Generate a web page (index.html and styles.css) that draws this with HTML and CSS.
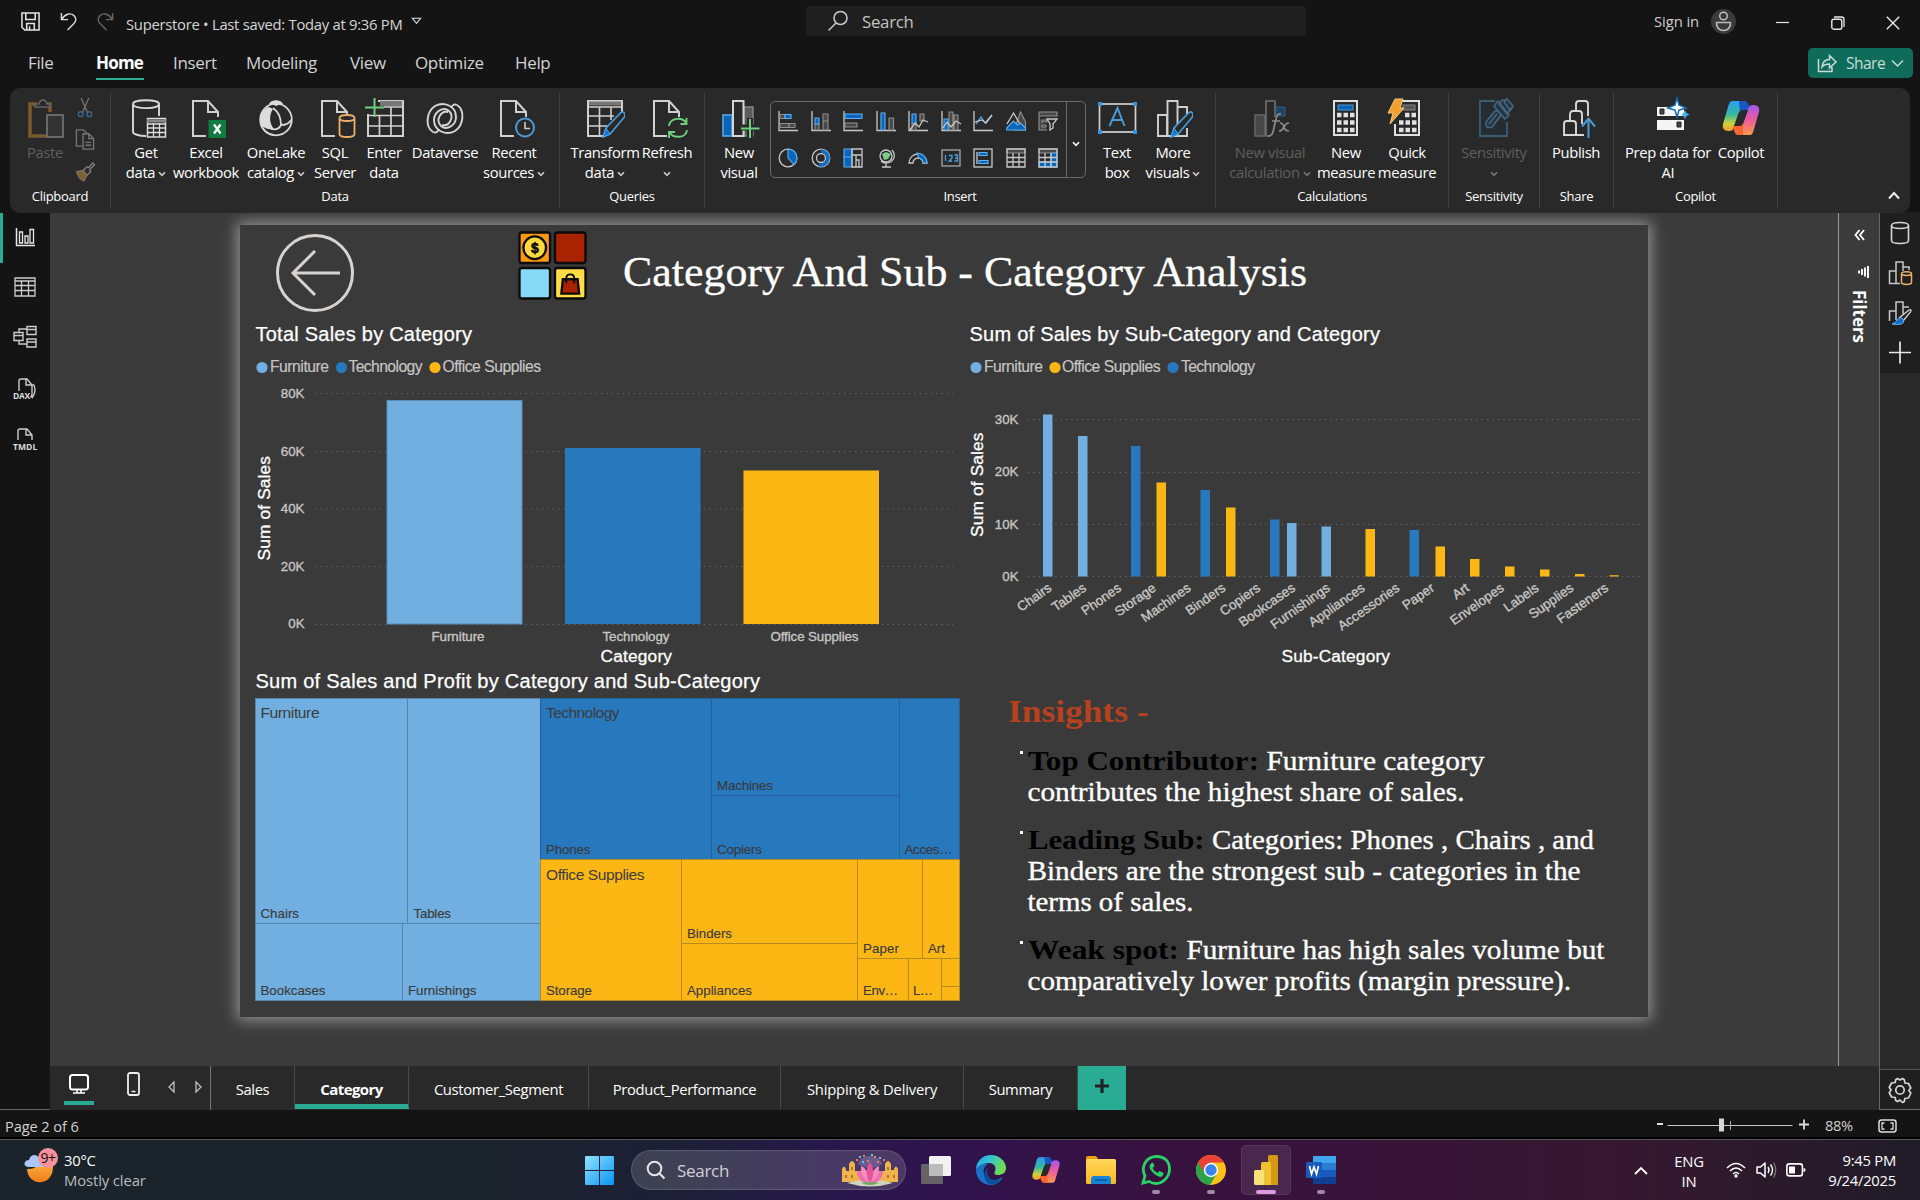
FILE: index.html
```html
<!DOCTYPE html>
<html lang="en">
<head>
<meta charset="utf-8">
<title>Superstore</title>
<link rel="stylesheet" href="styles.css">
</head>
<body>
<svg class="defs" width="0" height="0" aria-hidden="true">
  <defs>
    <linearGradient id="cpA" x1="0" y1="0" x2="0" y2="1"><stop offset="0" stop-color="#2a9df0"/><stop offset=".45" stop-color="#35b8a0"/><stop offset=".75" stop-color="#c8d236"/><stop offset="1" stop-color="#f59a2c"/></linearGradient>
    <linearGradient id="cpB" x1="0" y1="0" x2="0" y2="1"><stop offset="0" stop-color="#a259f0"/><stop offset=".5" stop-color="#ec5c9b"/><stop offset="1" stop-color="#fb9a4a"/></linearGradient>
    <linearGradient id="win" x1="0" y1="0" x2="1" y2="1"><stop offset="0" stop-color="#8fe3ff"/><stop offset="1" stop-color="#0a93f5"/></linearGradient>
    <linearGradient id="edge" x1="0" y1="0" x2="1" y2=".3"><stop offset="0" stop-color="#2aa7ea"/><stop offset=".5" stop-color="#35c4d0"/><stop offset="1" stop-color="#6fdc4e"/></linearGradient>
    <linearGradient id="moon" x1="0" y1="0" x2="0" y2="1"><stop offset="0" stop-color="#ffc34d"/><stop offset="1" stop-color="#ef7d1a"/></linearGradient>
    <linearGradient id="fold" x1="0" y1="0" x2="0" y2="1"><stop offset="0" stop-color="#ffd65c"/><stop offset="1" stop-color="#fbb91c"/></linearGradient>
    <symbol id="chev" viewBox="0 0 8 6"><path d="M1 1.200 4 4.400 7 1.200" fill="none" stroke="currentColor" stroke-width="1.600"/></symbol>
    <symbol id="copilot" viewBox="0 0 40 40">
      <path d="M11 3h11c3 0 4 2 5 5l1 4h-6c-3 0-4 2-5 5l-4 12c-1 3-2 4-5 4H7c-4 0-6-3-5-7l5-17c1-4 2-6 4-6z" fill="url(#cpA)"/>
      <path d="M18 3h5c3 0 4 2 5 5l1 4h-6c-2 0-3 1-4 3z" fill="#1b55c4"/>
      <path d="M29 37H18c-3 0-4-2-5-5l-1-4h6c3 0 4-2 5-5l4-12c1-3 2-4 5-4h1c4 0 6 3 5 7l-5 17c-1 4-2 6-4 6z" fill="url(#cpB)"/>
      <path d="M22 37h-4c-3 0-4-2-5-5l-1-4h6c2 0 3-1 4-3z" fill="#f8632f"/>
      <path d="M17 17c1-3 2-5 5-5h5l-4 11c-1 3-2 5-5 5h-5z" fill="#2a2a2a"/>
    </symbol>
    <symbol id="page" viewBox="0 0 40 40"><path d="M20 38H7V3h15l10 11v5M22 3v11h10" fill="none" stroke="#d0d0d0" stroke-width="2"/></symbol>
    <symbol id="pencil" viewBox="0 0 40 40"><path d="M18 39l3-9L36 14.500q2.500-1.500 3.500 1t-.5 4L25 36z" fill="#292929" stroke="#4a9ad8" stroke-width="1.700"/><path d="M18 39l3-9 4 6z" fill="#1377d0" stroke="#4aa0e4"/></symbol>
  </defs>
</svg>

<header class="titlebar">
  <div class="quick">
    <svg class="ic-save" viewBox="0 0 20 20"><path d="M1 1h18v18H4L1 16zM5 1v7h10V1M6 19v-7h8v7M9 15v4" fill="none" stroke="#e4e4e4" stroke-width="1.600"/></svg>
    <svg class="ic-undo" viewBox="0 0 18 20"><path d="M1.500 1v7h7M2 7.500C5 2 11 .5 14.500 3.500s2.500 6.500 0 9L8 19" fill="none" stroke="#dcdcdc" stroke-width="1.500"/></svg>
    <svg class="ic-redo" viewBox="0 0 18 20"><path d="M16.500 1v7h-7M16 7.500C13 2 7 .5 3.500 3.500s-2.500 6.500 0 9L10 19" fill="none" stroke="#666" stroke-width="1.500"/></svg>
    <span class="doc">Superstore • Last saved: Today at 9:36 PM</span>
    <svg class="ic-caret" viewBox="0 0 12 8"><path d="M1.500 1h9L6 6.500z" fill="none" stroke="#ddd" stroke-width="1.200"/></svg>
  </div>
  <div class="search">
    <svg width="22" height="22" viewBox="0 0 22 22"><circle cx="13.500" cy="8" r="6.500" fill="none" stroke="#ccc" stroke-width="1.500"/><path d="M9 13 1.500 20.500" stroke="#ccc" stroke-width="1.500"/></svg>
    <span>Search</span>
  </div>
  <div class="account">
    <span>Sign in</span>
    <svg width="25" height="25" viewBox="0 0 25 25"><circle cx="12.500" cy="12.500" r="12.500" fill="#3a3a3a"/><circle cx="12.500" cy="7" r="3.800" fill="none" stroke="#bdbdbd" stroke-width="1.500"/><path d="M5.500 13.500h14c.5 5-3 8-7 8s-7.500-3-7-8z" fill="none" stroke="#bdbdbd" stroke-width="1.500"/></svg>
  </div>
  <div class="winbtns">
    <svg width="14" height="14" viewBox="0 0 14 14"><path d="M0 6.500h13" stroke="#e8e8e8" stroke-width="1.200"/></svg>
    <svg width="14" height="14" viewBox="0 0 14 14"><rect x=".8" y="3.200" width="10" height="10" rx="2" fill="none" stroke="#e8e8e8" stroke-width="1.400"/><path d="M3 1h7.500q2.500 0 2.500 2.500V11" fill="none" stroke="#e8e8e8" stroke-width="1.300"/></svg>
    <svg width="14" height="14" viewBox="0 0 14 14"><path d="M.8.8l12.400 12.400M13.200.8.8 13.200" stroke="#f0f0f0" stroke-width="1.300"/></svg>
  </div>
</header>

<nav class="menu">
  <span class="m-file">File</span><span class="m-home on">Home</span><span class="m-insert">Insert</span><span class="m-model">Modeling</span><span class="m-view">View</span><span class="m-opt">Optimize</span><span class="m-help">Help</span>
  <button class="share"><svg width="20" height="20" viewBox="0 0 20 20"><path d="M1.500 6v12.500H15V14M5 14c.5-5 3-7.500 7.500-7.500V2.500L19 9l-6.500 6v-4C9 11 7 11.500 5 14z" fill="none" stroke="#c7dcd7" stroke-width="1.500"/></svg><span>Share</span><svg width="13" height="9" viewBox="0 0 13 9"><path d="M1 1.500l5.500 5.500L12 1.500" fill="none" stroke="#c7dcd7" stroke-width="1.500"/></svg></button>
</nav>

<section class="ribbon">
  <div class="group g-clip">
    <div class="tools">
      <div class="btn b66 off">
        <svg class="big" viewBox="0 0 40 40"><path d="M12 6H5v32h16M25 14V6h-5" fill="none" stroke="#7b5a2c" stroke-width="3.500"/><path d="M10 9V6h4q1-4 4-4t4 4h3v3z" fill="#292929" stroke="#666" stroke-width="1.600"/><rect x="22" y="17" width="16" height="22" fill="#333" stroke="#747474" stroke-width="1.700"/></svg>
        <b>Paste</b>
      </div>
      <div class="minis">
        <svg width="20" height="22" viewBox="0 0 20 22"><path d="M6 1l6.500 15M14 1 7.500 16" stroke="#777" stroke-width="1.300"/><circle cx="5.500" cy="18" r="2.500" fill="none" stroke="#3c6488" stroke-width="1.500"/><circle cx="14.500" cy="18" r="2.500" fill="none" stroke="#3c6488" stroke-width="1.500"/></svg>
        <svg width="20" height="22" viewBox="0 0 20 22"><path d="M7 18H1V1h7l4 3M8 5h6l5 5v11H8zM14 5v5h5M10.500 14h6M10.500 17h6" fill="none" stroke="#777" stroke-width="1.400"/></svg>
        <svg width="20" height="22" viewBox="0 0 20 22"><path d="M8 10l4-4 2 1 4-5 2 2-5 5 1 2-4 4z" fill="none" stroke="#808080" stroke-width="1.400"/><path d="M1 11l6-1 5 5-3 6c-4-1-6-4-8-10z" fill="#7b6038" stroke="#8f8068"/></svg>
      </div>
    </div>
    <p>Clipboard</p>
  </div>
  <div class="group g-data">
    <div class="tools">
      <div class="btn b70"><svg class="big" viewBox="0 0 40 40"><path d="M33 18V6c0-5-26-5-26 0v28c0 2 6 4 13 4M7 6c0 5.500 26 5.500 26 0" fill="none" stroke="#d8d8d8" stroke-width="1.900"/><rect x="21.500" y="20.500" width="18" height="18.500" fill="#292929" stroke="#ddd" stroke-width="1.500"/><path d="M21 23h19" stroke="#888" stroke-width="3"/><path d="M21 26h19M21 30h19M21 34.500h19M27.500 25v14M33.500 25v14" stroke="#ddd" stroke-width="1.300"/></svg><b>Get</b><b>data<svg class="cv"><use href="#chev"/></svg></b></div>
      <div class="btn b50"><svg class="big" viewBox="0 0 40 40"><use href="#page"/><rect x="22.500" y="22" width="17.500" height="18" fill="#107c41"/><path d="M28 26.500l6.500 9M34.500 26.500l-6.500 9" stroke="#fff" stroke-width="2.200"/></svg><b>Excel</b><b>workbook</b></div>
      <div class="btn b90"><svg class="big" viewBox="0 0 40 40"><circle cx="20" cy="21.500" r="15.800" fill="none" stroke="#d8d8d8" stroke-width="1.800"/><path d="M13 6c2-5 12-5 14 0-3 0-5 1-7 2-2-1-4-2-7-2zM12 9c2 0 3 1 5 2-4 6-4 14 1 20-6 1-10-1-13-4-2-7 0-14 7-18z" fill="#dcdcdc"/><path d="M17 10c7 5 8 11 8 17 4 0 8-1 10-5M25 27c-2 4-6 5-10 4M5 27c2 6 8 10 13 10" fill="none" stroke="#d8d8d8" stroke-width="1.800"/></svg><b>OneLake</b><b>catalog<svg class="cv"><use href="#chev"/></svg></b></div>
      <div class="btn b28"><svg class="big" viewBox="0 0 40 40"><use href="#page"/><path d="M24.500 20v16c0 4 15 4 15 0V20c0-4-15-4-15 0c0 4 15 4 15 0" fill="#292929" stroke="#eeb068" stroke-width="1.800"/></svg><b>SQL</b><b>Server</b></div>
      <div class="btn b70"><svg class="big" viewBox="0 0 40 40"><rect x="4" y="3" width="35" height="35" fill="none" stroke="#cfcfcf" stroke-width="2"/><path d="M16 5.500h22" stroke="#777" stroke-width="5"/><path d="M5 17.500h34M5 28h34M15.500 17v21M27 9v29M20 9h18" stroke="#cfcfcf" stroke-width="1.700"/><path d="M0 0h14v16H0z" fill="#292929"/><path d="M1 9.500h19M10.500 0v19" stroke="#6fcf7c" stroke-width="2"/></svg><b>Enter</b><b>data</b></div>
      <div class="btn b52"><svg class="big" viewBox="0 0 40 40"><g fill="none" stroke="#d5d5d5" stroke-width="1.900"><path d="M8 34C0 29 1 14 10 8c9-5 21 0 21 11 0 8-9 14-15 9-6-6 0-16 7-14"/><path d="M32 7c8 5 7 20-2 26-9 5-21 0-21-11 0-8 9-14 15-9 6 6 0 16-7 14"/><path d="M8 34q4 2 6-3M32 7q-4-2-6 3"/></g></svg><b>Dataverse</b></div>
      <div class="btn b86"><svg class="big" viewBox="0 0 40 40"><use href="#page"/><circle cx="31" cy="29.500" r="9" fill="#292929" stroke="#4a9ad8" stroke-width="2"/><path d="M31 24v6.500h5" fill="none" stroke="#ccc" stroke-width="1.600"/></svg><b>Recent</b><b>sources<svg class="cv"><use href="#chev"/></svg></b></div>
    </div>
    <p>Data</p>
  </div>
  <div class="group g-query">
    <div class="tools">
      <div class="btn b90"><svg class="big" viewBox="0 0 40 40"><path d="M37 14V3H3v35h18" fill="none" stroke="#cfcfcf" stroke-width="2"/><path d="M4 5.500h32" stroke="#777" stroke-width="4"/><path d="M3 9h34M3 18h26M3 28h20M14.500 9v29M26 9v13" stroke="#cfcfcf" stroke-width="1.600"/><use href="#pencil"/></svg><b>Transform</b><b>data<svg class="cv"><use href="#chev"/></svg></b></div>
      <div class="btn b34"><svg class="big" viewBox="0 0 40 40"><use href="#page"/><circle cx="31" cy="31" r="11" fill="#292929"/><path d="M22 28c1-9 14-9 17-3M39.500 20v6h-6M40 32c-1 9-14 8-17 3M22 40v-6h6" fill="none" stroke="#6fcf7c" stroke-width="1.900"/></svg><b>Refresh</b><b><svg class="cv solo"><use href="#chev"/></svg></b></div>
    </div>
    <p>Queries</p>
  </div>
  <div class="group g-insert">
    <div class="tools">
      <div class="btn b65"><svg class="big" viewBox="0 0 40 40"><rect x="25" y="9" width="9" height="29" fill="#5c5c5c" stroke="#888" stroke-width="1.400"/><rect x="4" y="17" width="9" height="21" fill="#0a63b4" stroke="#58a6e6" stroke-width="1.600"/><rect x="14" y="3" width="10.500" height="35" fill="#292929" stroke="#d5d5d5" stroke-width="2"/><path d="M20 29.500h20M31 20v20" stroke="#292929" stroke-width="6"/><path d="M22 30.500h18.500M31 21v19" stroke="#6fcf7c" stroke-width="2"/></svg><b>New</b><b>visual</b></div>
      <div class="gallery">
        <div class="cells">
          <svg viewBox="0 0 20 20"><path d="M1 0v19.500h19" class="w"/><path d="M2 3.500h5v4H2zM2 12.500h9v4H2z" class="g"/><path d="M7 3.500h6v4H7z" class="b"/><path d="M11 12.500h6v4h-6z" class="g"/></svg>
          <svg viewBox="0 0 20 20"><path d="M1 0v19.500h19" class="w"/><path d="M4 13h4v6H4zM12 10h5v9h-5zM12 3h5v7h-5z" class="g"/><path d="M4 7h4v6H4z" class="b"/></svg>
          <svg viewBox="0 0 20 20"><path d="M1 0v19.500h19" class="w"/><path d="M2 3h17v4.500H2z" class="b"/><path d="M2 12h12v4H2z" class="g"/></svg>
          <svg viewBox="0 0 20 20"><path d="M1 0v19.500h19" class="w"/><path d="M5 2h4v17H5z" class="b"/><path d="M13 7h4.500v12H13z" class="g"/></svg>
          <svg viewBox="0 0 20 20"><path d="M1 0v19.500h19" class="w"/><path d="M4 3h4v10H4z" class="b"/><path d="M12 3h4v7h-4zM4 13h4v6H4z" class="g"/><path d="M2 19l5-7 4 4 4-7 5 2" class="w"/></svg>
          <svg viewBox="0 0 20 20"><path d="M1 0v19.500h19" class="w"/><path d="M8 1h4v18H8zM13 4h4v15h-4z" class="g"/><path d="M3 8h4v11H3z" class="b"/><path d="M2 17l4-6 4 5 5-6 5 3" class="w"/></svg>
          <svg viewBox="0 0 20 20"><path d="M1 0v19.500h19" class="w"/><path d="M3 13l5-7 4 6 7-8" class="bl"/><path d="M2 11l7-2 4 3 6-8" class="w"/></svg>
          <svg viewBox="0 0 20 20"><path d="M8 19 14.500 1 19.500 11v8z" class="g"/><path d="M1 13 7.500 2l7 12" class="w"/><path d="M.7 19V17L7.500 10l4 4 3-2 5 5v2z" class="b"/></svg>
          <svg viewBox="0 0 20 20"><path d="M1 1h18v4H1zM1 5v14h8M4 9h5v2H4zM4 14h4v2H4z" class="g"/><path d="M9 8h10l-4 5v4l-3 2v-6z" class="w"/></svg>
          <svg viewBox="0 0 20 20"><circle cx="10" cy="10" r="8.800" class="w"/><path d="M10 1a9 9 0 0 1 6 15.500L10 10z" class="b"/></svg>
          <svg viewBox="0 0 20 20"><circle cx="10" cy="10" r="8.800" class="w"/><circle cx="10" cy="10" r="4.500" class="w"/><path d="M10 3a7 7 0 1 1-2 13.700" fill="none" stroke="#1170c6" stroke-width="3.500"/></svg>
          <svg viewBox="0 0 20 20"><path d="M1 1h8v8H1zM1 9h8v10H1z" class="b"/><path d="M9 1h10v18H9zM9 7h10M13 7v12M13 12h3v7" class="w"/></svg>
          <svg viewBox="0 0 20 20"><circle cx="10" cy="8" r="6" class="w"/><path d="M6 6l4-2 5 2-3 5-4 1z" fill="#7fc98b"/><path d="M16 2c5 6 1 13-6 13-3 0-4-1-5-2M10 15v4M6 19h9" class="w"/></svg>
          <svg viewBox="0 0 20 20"><path d="M1 15a9 9 0 0 1 18 0h-4a5 5 0 0 0-10 0z" class="w"/><path d="M9 5a10 10 0 0 1 10 10h-4a5 5 0 0 0-4-5z" class="b"/></svg>
          <svg viewBox="0 0 20 20"><rect x="1" y="2" width="18" height="16" class="g2"/><path d="M4.500 7v6M8 7.500h3v2.500l-3 3h3M13.500 7h3v6h-3M14 10h2" class="bl"/></svg>
          <svg viewBox="0 0 20 20"><rect x="1" y="1" width="18" height="18" class="w"/><path d="M4 4v12" class="w"/><path d="M6 4.500h8v3H6zM6 12.500h9v3H6z" class="b"/></svg>
          <svg viewBox="0 0 20 20"><path d="M1 1h18v4H1z" class="g"/><path d="M1 1h18v18H1zM1 9.500h18M1 14h18M7 5v14M13 5v14" class="w"/></svg>
          <svg viewBox="0 0 20 20"><path d="M1 1h18v4H1z" class="g"/><path d="M1 14h18v5H1zM13 5h6v14h-6z" class="b"/><path d="M1 1h18v18H1zM1 9.500h18M1 14h18M7 5v14M13 5v14" class="w"/></svg>
        </div>
        <div class="more"><svg class="cv"><use href="#chev"/></svg></div>
      </div>
      <div class="btn b62"><svg class="big" viewBox="0 0 40 40"><rect x="2.500" y="6" width="36" height="28" fill="none" stroke="#d0d0d0" stroke-width="1.700"/><path d="M12.500 28l8-18 7 18M15 22h11" fill="none" stroke="#4a9ad8" stroke-width="2"/><path d="M1 4h4v4H1zM36 4h4v4h-4zM1 32h4v4H1zM36 32h4v4h-4z" fill="#3593dc"/></svg><b>Text</b><b>box</b></div>
      <div class="btn b50"><svg class="big" viewBox="0 0 40 40"><path d="M5 38V17h9v21zM14.500 38V3h10v35M25 9h9v8M14 38h20v-8" fill="none" stroke="#d0d0d0" stroke-width="1.900"/><use href="#pencil"/></svg><b>More</b><b>visuals<svg class="cv"><use href="#chev"/></svg></b></div>
    </div>
    <p>Insert</p>
  </div>
  <div class="group g-calc">
    <div class="tools">
      <div class="btn b108 off"><svg class="big" viewBox="0 0 40 40"><rect x="5" y="17" width="10" height="21" fill="#474747" stroke="#666" stroke-width="1.500"/><path d="M16 38V3h9v16M16 38h4" fill="none" stroke="#707070" stroke-width="1.600"/><path d="M26 9h9v9h-9z" fill="#1d4468" stroke="#345c80"/><path d="M31 16q-4-1-5 5l-3 13q-1 4-5 4M22 23h8M30 25q3 0 4 4t5 4M39 25q-3 0-5 4t-5 4" fill="none" stroke="#8b8b8b" stroke-width="1.700"/></svg><b>New visual</b><b>calculation<svg class="cv"><use href="#chev"/></svg></b></div>
      <div class="btn b44"><svg class="big" viewBox="0 0 40 40"><rect x="8" y="3" width="23" height="34" fill="none" stroke="#e0e0e0" stroke-width="2"/><rect x="12" y="7" width="15" height="5" fill="#0a63b4" stroke="#4a9ad8"/><path d="M11 17h18M11 24.500h18M11 32h18" stroke="#e0e0e0" stroke-width="4.500" stroke-dasharray="4.500 2"/></svg><b>New</b><b>measure</b></div>
      <div class="btn b78"><svg class="big" viewBox="0 0 40 40"><path d="M12 3h20v34H8V26" fill="none" stroke="#e0e0e0" stroke-width="2"/><rect x="16" y="7" width="12" height="5" fill="#555" stroke="#888"/><path d="M18 17h12M12 24.500h18M12 32h18" stroke="#e0e0e0" stroke-width="4.500" stroke-dasharray="4.500 2"/><path d="M8 1h8l-3 9h4L3 26l3-11H1z" fill="#f0a02c" stroke="#f7c986"/></svg><b>Quick</b><b>measure</b></div>
    </div>
    <p>Calculations</p>
  </div>
  <div class="group g-sens">
    <div class="tools">
      <div class="btn b90 off"><svg class="big" viewBox="0 0 40 40"><path d="M21 3H6v35h27V24" fill="#252d33" stroke="#3a5d76" stroke-width="1.800"/><g fill="#29323a" stroke="#3f6784" stroke-width="1.700"><path d="M12 24 21 13q4-1 6 4L18 29q-7 2-6-5zM15 26l8-10"/><path d="M20 8l4-5 11 14-4 4zM25 6l3-4h3l7 8-5 6z"/><path d="M33 1l6 7-3 4-6-8z"/></g></svg><b>Sensitivity</b><b><svg class="cv solo"><use href="#chev"/></svg></b></div>
    </div>
    <p>Sensitivity</p>
  </div>
  <div class="group g-share">
    <div class="tools">
      <div class="btn b72"><svg class="big" viewBox="0 0 40 40"><path d="M28 37H8V26q0-3 3-3h6q3 0 3 3v11M14 22v-5q0-4 3-4h6q3 0 3 3v10M20 12V6q0-3 3-3h6q3 0 3 3v12" fill="none" stroke="#d8d8d8" stroke-width="1.900"/><path d="M32.500 40V21M26 28.500l6.500-8 6.500 8" fill="none" stroke="#4a9ad8" stroke-width="2"/></svg><b>Publish</b></div>
    </div>
    <p>Share</p>
  </div>
  <div class="group g-cop">
    <div class="tools">
      <div class="btn b108"><svg class="big" viewBox="0 0 40 40"><path d="M9 9h27v9H9zM9 22h27v10H9z" fill="#f5f5f5"/><path d="M12 11h4v5h-4zM29 24h4v5h-4z" fill="#444" stroke="#222"/><path d="M29 0l2 7 7 3-7 2-2 7-2-7-7-2 7-3z" fill="#fff" stroke="#126aae" stroke-width="1.500"/><path d="M37 12l1.500 3 3 1.500-3 1.500-1.500 3-1.500-3-2-1.500 2-1.500z" fill="#3db2f0"/></svg><b>Prep data for</b><b>AI</b></div>
      <div class="btn b38"><svg class="big"><use href="#copilot"/></svg><b>Copilot</b></div>
    </div>
    <p>Copilot</p>
  </div>
  <div class="collapse"><svg width="12" height="9" viewBox="0 0 12 9"><path d="M1 7.500 6 2l5 5.500" fill="none" stroke="#eee" stroke-width="2"/></svg></div>
</section>

<main class="work">
  <aside class="rail">
    <div class="slot on"><svg width="20" height="20" viewBox="0 0 20 20"><path d="M1.500 1v17.500H20" fill="none" stroke="#e8e8e8" stroke-width="1.500"/><path d="M4.500 5h3v11h-3zM10 9h3v7h-3zM15 2.500h3.500V16H15z" fill="none" stroke="#e8e8e8" stroke-width="1.300"/></svg></div>
    <div class="slot"><svg width="22" height="20" viewBox="0 0 22 20"><path d="M1 1h20v18H1zM1 4h20M1 8.500h20M1 13.500h20M7.500 4v15M14.500 4v15" fill="none" stroke="#ccc" stroke-width="1.300"/></svg></div>
    <div class="slot"><svg width="24" height="24" viewBox="0 0 24 24"><path d="M1 7.500h9v8H1zM1 10.500h9M14 1.500h9v8h-9zM14 4.500h9M14 14h9v8h-9zM14 17h9M6 7.500V4h8M6 15.500V19h8" fill="none" stroke="#ccc" stroke-width="1.400"/></svg></div>
    <div class="slot dax"><svg width="24" height="24" viewBox="0 0 24 24"><path d="M6 14V4q0-2 2-2h6l5 6v9q0 3-2 3M13 2v6h6M20 7q2 2 2 6t-3 8" fill="none" stroke="#ccc" stroke-width="1.400"/><text x="0" y="22" textLength="17">DAX</text></svg></div>
    <div class="slot dax"><svg width="24" height="24" viewBox="0 0 24 24"><path d="M5 13V4q0-2 2-2h7l5 6v5M13 2v6h6" fill="none" stroke="#ccc" stroke-width="1.400"/><text x="0" y="22.500" textLength="24">TMDL</text></svg></div>
  </aside>

  <div class="stage">
    <div class="canvas">
      <article class="report">
        <div class="head">
          <svg class="back" viewBox="0 0 78 78"><circle cx="39" cy="39" r="37.500" fill="none" stroke="#d6d4d2" stroke-width="3"/><path d="M64 39H17M39 17 17 39l22 22" fill="none" stroke="#d6d4d2" stroke-width="3"/></svg>
          <svg class="logo" viewBox="0 0 70 70"><g stroke="#0b0b0b" stroke-width="2.400"><rect x="1.500" y="1.500" width="31" height="31" rx="2.500" fill="#ff9811"/><rect x="37.500" y="1.500" width="31" height="31" rx="2.500" fill="#aa2300"/><rect x="1.500" y="37.500" width="31" height="31" rx="2.500" fill="#87daf6"/><rect x="37.500" y="37.500" width="31" height="31" rx="2.500" fill="#ffdc46"/><circle cx="17" cy="17" r="11.500" fill="#ffd93b"/><path d="M45.500 49h15l1.500 14.500H44z" fill="#aa2300"/><path d="M49 53v-5q0-4 4-4t4 4v5" fill="none" stroke-width="2"/></g><text x="17" y="22" text-anchor="middle" class="usd">$</text></svg>
          <svg class="title" viewBox="623 225 690 90" width="690" height="90"><text x="623" y="286" textLength="684" lengthAdjust="spacingAndGlyphs">Category And Sub - Category Analysis</text></svg>
        </div>

        <svg class="chart c1" viewBox="240 315 720 351" width="720" height="351">
          <text class="ttl" x="255.500" y="340.500" textLength="216.500">Total Sales by Category</text>
          <g class="leg"><circle cx="262" cy="367.500" r="5.600" fill="#71afe2"/><text x="270" y="372" textLength="59">Furniture</text><circle cx="341.500" cy="367.500" r="5.600" fill="#2878be"/><text x="348.500" y="372" textLength="74">Technology</text><circle cx="435" cy="367.500" r="5.600" fill="#fdb714"/><text x="442.500" y="372" textLength="98.500">Office Supplies</text></g>
          <path class="grid" d="M315 393.500H953M315 451.500H953M315 509H953M315 566.500H953M315 624.500H953"/>
          <g class="ax end"><text x="304.500" y="398">80K</text><text x="304.500" y="456">60K</text><text x="304.500" y="513">40K</text><text x="304.500" y="571">20K</text><text x="304.500" y="628">0K</text></g>
          <rect x="387" y="400.500" width="135" height="223.500" fill="#71afe0" stroke="#5a8cb4"/><rect x="565" y="448" width="135.500" height="176" fill="#2878be"/><rect x="743.500" y="470.500" width="135.500" height="153.500" fill="#fdb714"/>
          <g class="ax mid"><text x="458" y="641" textLength="53">Furniture</text><text x="636" y="641" textLength="67">Technology</text><text x="814.500" y="641" textLength="88">Office Supplies</text></g>
          <text class="axt" x="600.500" y="661.500" textLength="71.500">Category</text>
          <text class="axt" transform="translate(269.500 560.500) rotate(-90)" textLength="104.500">Sum of Sales</text>
        </svg>

        <svg class="chart c2" viewBox="960 315 688 353" width="688" height="353">
          <text class="ttl" x="969.500" y="340.500" textLength="410.500">Sum of Sales by Sub-Category and Category</text>
          <g class="leg"><circle cx="976" cy="367.500" r="5.600" fill="#71afe2"/><text x="984" y="372" textLength="59">Furniture</text><circle cx="1055" cy="367.500" r="5.600" fill="#fdb714"/><text x="1062" y="372" textLength="98.500">Office Supplies</text><circle cx="1173" cy="367.500" r="5.600" fill="#2878be"/><text x="1181" y="372" textLength="74">Technology</text></g>
          <path class="grid" d="M1028 419.500H1640M1028 472.500H1640M1028 524.500H1640M1028 576.500H1640"/>
          <g class="ax end"><text x="1018.500" y="424">30K</text><text x="1018.500" y="476">20K</text><text x="1018.500" y="529">10K</text><text x="1018.500" y="581">0K</text></g>
          <path fill="#71afe0" d="M1043 414.500h9.500V576.500h-9.500zM1078 436h9.500V576.500H1078zM1287 523h9.500v53.500H1287zM1321.500 526.500h9.500v50h-9.500z"/>
          <path fill="#2878be" d="M1131 446h9.500v130.500H1131zM1200.500 490h9.500v86.500h-9.500zM1270 519.500h9.500v57H1270zM1409.500 530h9.500v46.500h-9.500z"/>
          <path fill="#fdb714" d="M1156.500 482.500h9.500v94h-9.500zM1226 507.500h9.500v69H1226zM1365.500 529h9.500v47.500h-9.500zM1435.500 546.500h9.500v30h-9.500zM1470 559h9.500v17.500H1470zM1505 566.500h9.500v10H1505zM1540 569.500h9.500v7H1540zM1575 574h9.500v2.500H1575zM1609.500 575.200h9.500v1.300h-9.500z"/>
          <g class="ax end rot">
            <text transform="translate(1052.500 590) rotate(-35)">Chairs</text><text transform="translate(1087.300 590) rotate(-35)">Tables</text><text transform="translate(1122.100 590) rotate(-35)">Phones</text><text transform="translate(1156.900 590) rotate(-35)">Storage</text><text transform="translate(1191.700 590) rotate(-35)">Machines</text><text transform="translate(1226.500 590) rotate(-35)">Binders</text><text transform="translate(1261.300 590) rotate(-35)">Copiers</text><text transform="translate(1296.100 590) rotate(-35)">Bookcases</text><text transform="translate(1330.900 590) rotate(-35)">Furnishings</text><text transform="translate(1365.700 590) rotate(-35)">Appliances</text><text transform="translate(1400.500 590) rotate(-35)">Accessories</text><text transform="translate(1435.300 590) rotate(-35)">Paper</text><text transform="translate(1470.100 590) rotate(-35)">Art</text><text transform="translate(1504.900 590) rotate(-35)">Envelopes</text><text transform="translate(1539.700 590) rotate(-35)">Labels</text><text transform="translate(1574.500 590) rotate(-35)">Supplies</text><text transform="translate(1609.300 590) rotate(-35)">Fasteners</text>
          </g>
          <text class="axt" x="1281.500" y="661.500" textLength="108.500">Sub-Category</text>
          <text class="axt" transform="translate(982.500 537) rotate(-90)" textLength="104.500">Sum of Sales</text>
        </svg>

        <svg class="chart tree" viewBox="240 668 720 349" width="720" height="349">
          <text class="ttl" x="255.500" y="687.500" textLength="504.500">Sum of Sales and Profit by Category and Sub-Category</text>
          <path fill="#71afe0" d="M255 698h285.500v302.500H255z"/><path fill="#2878be" d="M540.500 698H960v161.500H540.500z"/><path fill="#fdb714" d="M540.500 859.500H960v141H540.500z"/>
          <path class="ln bl1" d="M255.500 698.500h285v302h-285zM407.500 698v225M255 923.500h285M402.500 923.500v77"/>
          <path class="ln bl2" d="M540.500 698.500h419v161h-419zM711.500 698v161M899.500 698v161M711.500 795.500h188"/>
          <path class="ln or" d="M540.500 859.500h419v141h-419zM681.500 859.500v141M857.500 859.500v141M922.500 859.500v99M681.500 943.500h176M857.500 958.500h102M908.500 958.500v42M941.500 958.500v42M941.500 986.500h18"/>
          <g class="th"><text x="260.500" y="718" textLength="59">Furniture</text><text x="546" y="718" textLength="73.500">Technology</text><text x="546" y="880" textLength="98.500">Office Supplies</text></g>
          <g class="ti"><text x="260.500" y="918" textLength="38.500">Chairs</text><text x="413.500" y="918" textLength="37.500">Tables</text><text x="260.500" y="995" textLength="65">Bookcases</text><text x="408" y="995" textLength="68.500">Furnishings</text><text x="546" y="854" textLength="44.500">Phones</text><text x="717" y="790" textLength="56">Machines</text><text x="717" y="854" textLength="45">Copiers</text><text x="904.500" y="854" textLength="48">Acces…</text><text x="546" y="995" textLength="46">Storage</text><text x="687" y="938" textLength="45">Binders</text><text x="687" y="995" textLength="65">Appliances</text><text x="863" y="953" textLength="36">Paper</text><text x="928" y="953" textLength="17">Art</text><text x="863" y="995" textLength="35">Env…</text><text x="913" y="995" textLength="20">L…</text></g>
        </svg>

        <svg class="chart notes" viewBox="960 668 688 349" width="688" height="349">
          <text class="ins" x="1008" y="721.500" textLength="140.500" lengthAdjust="spacingAndGlyphs">Insights -</text>
          <path fill="#fff" d="M1020 751h3v3h-3zM1020 831h3v3h-3zM1020 941h3v3h-3z"/>
          <g class="k"><text x="1028" y="770" textLength="231" lengthAdjust="spacingAndGlyphs">Top Contributor:</text><text x="1028" y="849" textLength="176.500" lengthAdjust="spacingAndGlyphs">Leading Sub:</text><text x="1028" y="958.500" textLength="151" lengthAdjust="spacingAndGlyphs">Weak spot:</text></g>
          <g class="v"><text x="1266.500" y="770" textLength="218" lengthAdjust="spacingAndGlyphs">Furniture category</text><text x="1027.500" y="801" textLength="437" lengthAdjust="spacingAndGlyphs">contributes the highest share of sales.</text><text x="1212" y="849" textLength="382" lengthAdjust="spacingAndGlyphs">Categories: Phones , Chairs , and</text><text x="1027.500" y="880" textLength="553" lengthAdjust="spacingAndGlyphs">Binders are the strongest sub - categories in the</text><text x="1027.500" y="911" textLength="166" lengthAdjust="spacingAndGlyphs">terms of sales.</text><text x="1186.500" y="958.500" textLength="418" lengthAdjust="spacingAndGlyphs">Furniture has high sales volume but</text><text x="1027.500" y="990" textLength="543.500" lengthAdjust="spacingAndGlyphs">comparatively lower profits (margin pressure).</text></g>
        </svg>
      </article>
    </div>
    <aside class="filters">
      <svg width="11" height="12" viewBox="0 0 11 12"><path d="M5.500 1 1.500 6l4 5M10 1 6 6l4 5" fill="none" stroke="#fff" stroke-width="1.800"/></svg>
      <svg class="fi" width="11" height="12" viewBox="0 0 11 12"><path d="M1 4.500v3M4 3v6M7 1.500v9M10 0v12" stroke="#fff" stroke-width="1.900"/></svg>
      <span>Filters</span>
    </aside>
    <footer class="pages">
      <div class="ctl">
        <div class="desk"><svg width="20" height="20" viewBox="0 0 20 20"><rect x="1" y="1" width="18" height="14.500" rx="2.500" fill="none" stroke="#fff" stroke-width="2"/><path d="M4 19h12M8 16v3M12 16v3" stroke="#fff" stroke-width="1.500"/></svg></div>
        <svg class="ph" width="13" height="24" viewBox="0 0 13 24"><rect x="1" y="1" width="11" height="22" rx="2" fill="none" stroke="#eee" stroke-width="1.800"/><path d="M4.500 19.500h4" stroke="#eee" stroke-width="1.500"/></svg>
        <svg class="pl" width="7" height="12" viewBox="0 0 7 12"><path d="M6 1v10L1 6z" fill="none" stroke="#c9c9c9" stroke-width="1.200"/></svg>
        <svg class="pr" width="7" height="12" viewBox="0 0 7 12"><path d="M1 1v10l5-5z" fill="none" stroke="#c9c9c9" stroke-width="1.200"/></svg>
      </div>
      <div class="tab t1">Sales</div><div class="tab t2 on">Category</div><div class="tab t3">Customer_Segment</div><div class="tab t4">Product_Performance</div><div class="tab t5">Shipping &amp; Delivery</div><div class="tab t6">Summary</div>
      <div class="add"><svg width="14" height="14" viewBox="0 0 14 14"><path d="M0 7h14M7 0v14" stroke="#222" stroke-width="3.200"/></svg></div>
    </footer>
  </div>

  <aside class="panes">
    <div class="top">
      <svg width="24" height="24" viewBox="0 0 24 24"><path d="M3.500 4.500v15c0 4 17 4 17 0v-15c0-4-17-4-17 0c0 4 17 4 17 0" fill="none" stroke="#d5d5d5" stroke-width="1.600"/></svg>
      <svg width="24" height="24" viewBox="0 0 24 24"><path d="M1.500 22.500V10H8v12.500zM8 22V1h7v9M8 22.500h4M15 6h6v3" fill="none" stroke="#c8c8c8" stroke-width="1.500"/><path d="M13.500 12.500v9c0 2.500 10 2.500 10 0v-9c0-2.500-10-2.500-10 0c0 2.500 10 2.500 10 0" fill="#202020" stroke="#eeb068" stroke-width="1.500"/></svg>
      <svg width="24" height="24" viewBox="0 0 24 24"><path d="M1.500 20V10H8v9M8 16V1h7v12M15 6h6" fill="none" stroke="#c8c8c8" stroke-width="1.500"/><path d="M11 17 21 9q3-1 1.500 2L15 20" fill="#202020" stroke="#ddd" stroke-width="1.300"/><path d="M4 23q4-1 5-4 4-4 6-1 2 4-2 5-4 1-9 0z" fill="#1170c6" stroke="#69b2ee"/></svg>
      <svg width="24" height="24" viewBox="0 0 24 24"><path d="M1 11.500h22M12 .5v22" stroke="#e8e8e8" stroke-width="1.700"/></svg>
    </div>
    <div class="gear"><svg width="26" height="26" viewBox="0 0 26 26"><path d="M10.500 1.500 13 3l2.500-1.500 1.800 1.200.5 3.300 3.700.500 2.300 4.500-2 2.500 2 2.500-2.300 5-3.700.5-.5 3-1.800 1L13 23l-2.500 1.500-1.800-1-.5-3-3.700-.5L2.200 15.500l2-2.500-2-2.500L4.500 6l3.700-.5.5-2.800z" fill="none" stroke="#d5d5d5" stroke-width="1.700" stroke-linejoin="round"/><circle cx="13" cy="13" r="4.200" fill="none" stroke="#d5d5d5" stroke-width="1.700"/></svg></div>
  </aside>
</main>

<section class="status">
  <span>Page 2 of 6</span>
  <div class="zoom">
    <svg width="154" height="16" viewBox="0 0 154 16"><path d="M0 7h6M142 7.500h10M147 2.500v10" stroke="#ddd" stroke-width="1.800"/><path d="M10.500 8.500h125" stroke="#c8c8c8"/><path d="M73.500 4v9" stroke="#aaa"/><path d="M62 1.500h5v13h-5z" fill="#d5d5d5"/></svg>
    <span>88%</span>
    <svg class="fit" width="19" height="14" viewBox="0 0 19 14"><rect x="1" y="1" width="17" height="12" rx="2.500" fill="none" stroke="#ddd" stroke-width="1.500"/><path d="M6.500 4H4v6h2.500M12.500 4H15v6h-2.500" fill="none" stroke="#ddd" stroke-width="1.300"/></svg>
  </div>
</section>

<footer class="taskbar">
  <div class="weather">
    <svg width="36" height="38" viewBox="0 0 36 38"><path d="M3 23q12 1 16-14 9 0 10 12c0 20-25 20-26 2z" transform="translate(0 -1)" fill="url(#moon)"/><path d="M4 20q-5-1-3-5 1-2 4-2 1-5 6-5 4 1 5 5 6 0 5 5 0 2-3 2z" fill="#a9c8f5"/><circle cx="24" cy="11" r="10" fill="#f6909a"/><text x="24" y="16" text-anchor="middle" class="nine">9+</text></svg>
    <div><span>30°C</span><span class="dim">Mostly clear</span></div>
  </div>
  <svg class="start" width="29" height="29" viewBox="0 0 29 29"><path d="M0 1q0-1 1-1h13v14H0zM15 0h13q1 0 1 1v13H15zM0 15h14v14H1q-1 0-1-1zM15 15h14v13q0 1-1 1H15z" fill="url(#win)"/></svg>
  <div class="tsearch">
    <svg width="20" height="20" viewBox="0 0 20 20"><circle cx="8.500" cy="8.500" r="6.800" fill="none" stroke="#e4e4e8" stroke-width="2"/><path d="M13.500 13.500 18.500 18.500" stroke="#e4e4e8" stroke-width="2.200"/></svg>
    <span>Search</span>
    <svg class="lotus" width="58" height="33" viewBox="0 0 58 33"><path d="M1 28V15q2-5 4 0v2h3V10q3-6 6 0v7h30V10q3-6 6 0v6h3v-1q2-5 4 0v13z" fill="#f0b44c"/><path d="M4 21h2v3H4zM10 13h2v3h-2zM10 21h2v3h-2zM46 13h2v3h-2zM46 21h2v3h-2zM52 21h2v3h-2z" fill="#b8742c"/><path d="M6 29q23-7 46 0-23 7-46 0z" fill="#cfd6c0"/><path d="M29 2c4 0 12 3 12 8q-12 8-24 0C17 5 25 2 29 2z" fill="#6a5a90"/><path d="M15 5h2v2h-2zM22 1h2v2h-2zM33 2h2v2h-2zM42 5h2v2h-2zM26 6h2v2h-2zM36 7h2v2h-2z" fill="#f57a4a"/><path d="M18 2h2v2h-2zM30 0h2v2h-2zM38 3h2v2h-2zM21 7h2v2h-2z" fill="#5ec8e8"/><path d="M16 17q8-1 13 12-12 1-13-12zM42 17q-8-1-13 12 12 1 13-12z" fill="#ee6fae"/><path d="M20 12q7 2 9 17-10-5-9-17zM38 12q-7 2-9 17 10-5 9-17z" fill="#f58cc0"/><path d="M29 8q7 10 0 21-7-11 0-21z" fill="#e4549a"/><path d="M20 29q9 4 18 0-9-2-18 0z" fill="#6fa860"/></svg>
  </div>
  <div class="apps">
    <div class="app"><svg width="30" height="30" viewBox="0 0 30 30"><rect x="8" y="1" width="22" height="20" rx="1.500" fill="#f2f2f2"/><rect x="0" y="9" width="22" height="20" rx="1.500" fill="#6b6b6b" opacity=".9"/><path d="M8 9h14v12H8z" fill="#bcbcbc"/></svg></div>
    <div class="app"><svg width="30" height="30" viewBox="0 0 30 30"><path d="M0 15C0 6 7 0 15 0s15 6 15 13c0 5-4 7-8 7-4 0-4-2-3-4 2-5-2-8-6-8C7 8 2 11 0 15z" fill="url(#edge)"/><path d="M0 15c2-5 8-7 12-6-4 2-5 6-4 10 1 6 8 9 19 3-3 5-7 8-12 8C7 30 0 24 0 15z" fill="#1a72c8"/><path d="M12 13c-3 7 2 15 14 11-4 5-9 6-13 5-6-4-6-13-1-16z" fill="#0c4f9c"/></svg></div>
    <div class="app"><svg width="30" height="30" viewBox="0 0 40 40"><use href="#copilot"/></svg></div>
    <div class="app"><svg width="30" height="28" viewBox="0 0 30 28"><path d="M0 2q0-2 2-2h8l3 4H0z" fill="#e8a010"/><rect x="0" y="3" width="30" height="25" rx="1.500" fill="url(#fold)"/><path d="M5 28v-5q0-3 3-3h14q3 0 3 3v5z" fill="#1583d8"/><path d="M9 24h12" stroke="#0b5a9c" stroke-width="1.600"/></svg></div>
    <div class="app dot"><svg width="30" height="30" viewBox="0 0 30 30"><path d="M2 28l2-7C-1 11 6 1.500 15.500 1.500S29 8 28.500 15 22 28.500 15 28.500q-4 0-6.500-2z" fill="none" stroke="#27d366" stroke-width="2.800"/><path d="M10.500 8q-4 3 0 8t9 6q3-1 3-4l-4-2-2 2q-3-1-5-5l2-2-1.500-3.500z" fill="#27d366"/></svg></div>
    <div class="app dot"><svg width="30" height="30" viewBox="0 0 30 30"><circle cx="15" cy="15" r="15" fill="#fbc116"/><path d="M15 15 2 7.500A15 15 0 0 0 14 30l7-11.500z" fill="#2ba24c"/><path d="M2 7.500A15 15 0 0 1 28 7.500H15L9 18.500z" fill="#ea4335"/><circle cx="15" cy="15" r="7.200" fill="#fff"/><circle cx="15" cy="15" r="5.700" fill="#3b83ee"/></svg></div>
    <div class="app active"><svg width="24" height="30" viewBox="0 0 24 30"><path d="M14 1.500q0-1.500 1.500-1.500h7Q24 0 24 1.500V30H14z" fill="#d69a12"/><path d="M7 8.500Q7 7 8.500 7h7Q17 7 17 8.500V30H7z" fill="#efc030"/><path d="M0 16.500Q0 15 1.500 15h7q1.500 0 1.500 1.500V30H1.500Q0 30 0 28.500z" fill="#f9e07a"/></svg></div>
    <div class="app dot"><svg width="30" height="28" viewBox="0 0 30 28"><rect x="7" y="0" width="23" height="28" rx="1.500" fill="#2b7cd3"/><path d="M7 0h23v7H7z" fill="#41a5ee"/><path d="M7 14h23v7H7z" fill="#185abd"/><path d="M7 21h23v7H7z" fill="#103f91"/><rect x="0" y="6" width="16" height="16" rx="1.500" fill="#185abd"/><path d="M3.500 10l2 8 2.500-7 2.500 7 2-8" fill="none" stroke="#fff" stroke-width="1.700"/></svg></div>
  </div>
  <div class="tray">
    <svg width="14" height="9" viewBox="0 0 14 9"><path d="M1 8l6-6 6 6" fill="none" stroke="#fff" stroke-width="1.800"/></svg>
    <div class="lang">ENG<br>IN</div>
    <svg class="wifi" width="20" height="16" viewBox="0 0 20 16"><path d="M1 6q9-9 18 0M4 9q6-6 12 0M7 12q3-3 6 0" fill="none" stroke="#fff" stroke-width="1.500"/><circle cx="10" cy="14" r="1.700" fill="#fff"/></svg>
    <svg class="spk" width="21" height="18" viewBox="0 0 21 18"><path d="M1 6h3.500L9 2v14l-4.500-4H1z" fill="none" stroke="#fff" stroke-width="1.500" stroke-linejoin="round"/><path d="M12 6q2 3 0 6M14.500 3.500q4 5.500 0 11" fill="none" stroke="#fff" stroke-width="1.400"/><path d="M17.500 1.500q4.500 7.500 0 15" fill="none" stroke="#776" stroke-width="1.300"/></svg>
    <svg class="bat" width="20" height="14" viewBox="0 0 20 14"><rect x=".9" y=".9" width="15.500" height="12" rx="2.500" fill="none" stroke="#fff" stroke-width="1.600"/><path d="M3 3.500h6v7H3z" fill="#fff"/><path d="M17.500 5q2 0 2 2t-2 2z" fill="#fff"/></svg>
    <div class="clock">9:45 PM<br>9/24/2025</div>
  </div>
</footer>
</body>
</html>
```
FILE: styles.css
```css
* { box-sizing: border-box; }
html, body { margin: 0; height: 1200px; overflow: hidden; }
body {
  width: 1920px;
  display: flex;
  flex-direction: column;
  background: #141414;
  color: #e6e6e6;
  font: 14.8px/20px "Segoe UI", "Open Sans", "Noto Sans", sans-serif;
  letter-spacing: -.25px;
}
svg { display: block; flex: none; overflow: visible; }
.defs { position: absolute; }
span, b { white-space: nowrap; }

/* title bar */
.titlebar { height: 44px; display: flex; flex: none; }
.quick { width: 806px; display: flex; padding: 12px 0 0 21px; color: #d6d6d6; }
.ic-save { width: 19px; height: 19px; }
.ic-undo { width: 17px; height: 19px; margin-left: 20px; }
.ic-redo { width: 17px; height: 19px; margin-left: 20px; }
.doc { margin-left: 12px; width: 277px; letter-spacing: -.27px; line-height: 25px; }
.ic-caret { width: 11px; height: 8px; margin: 5px 0 0 8px; }
.search { width: 500px; height: 30px; margin-top: 6px; background: #1f1f1f; border-radius: 3px; display: flex; align-items: center; padding-left: 21px; gap: 13px; font-size: 16.800px; color: #c4c4c4; }
.search span { padding-top: 2px; }
.account { width: 430px; display: flex; justify-content: flex-end; padding-top: 9px; gap: 12px; line-height: 25px; color: #d0d0d0; letter-spacing: -.1px; }
.winbtns { display: flex; padding: 16px 0 0 40px; gap: 41px; }

/* menu */
.menu { height: 44px; flex: none; display: flex; font-size: 17px; letter-spacing: -.35px; color: #d2d2d2; padding-left: 28px; }
.menu > span { height: 36px; line-height: 38px; }
.m-file { width: 68px; }
.m-home { width: 48px; margin-right: 29px; }
.m-insert { width: 73px; }
.m-model { width: 104px; }
.m-view { width: 65px; }
.m-opt { width: 100px; }
.menu .on { color: #fff; font-weight: 700; letter-spacing: -.8px; border-bottom: 2px solid #2aac94; }
.share { margin: 4px 7px 0 auto; width: 105px; height: 30px; border: 0; border-radius: 5px; background: #0f6b5a; color: #c7dcd7; display: flex; align-items: center; padding: 0 0 0 9px; gap: 7px; font: 15.500px "Segoe UI", "Open Sans", sans-serif; letter-spacing: -.5px; }
.share span { width: 38px; margin-left: 2px; }

/* ribbon */
.ribbon { flex: none; height: 125px; width: 1900px; margin-left: 10px; background: #292929; border-radius: 10px; display: flex; position: relative; z-index: 2; }
.group { height: 115px; margin-top: 5px; border-right: 1px solid #404040; display: flex; flex-direction: column; justify-content: space-between; }
.group p { margin: 0 0 2px; text-align: center; font-size: 13px; letter-spacing: -.3px; line-height: 20px; color: #fff; }
.tools { display: flex; height: 90px; }
.g-clip { width: 101px; }
.g-clip .tools { padding-left: 2px; }
.g-data { width: 449px; }
.g-query { width: 145px; }
.g-insert { width: 511px; }
.g-calc { width: 233px; }
.g-sens { width: 91px; }
.g-share { width: 74px; }
.g-cop { width: 164px; }
.btn { display: flex; flex-direction: column; align-items: center; padding-top: 5px; color: #fff; flex: none; }
.btn b { font-weight: 400; height: 19.500px; line-height: 20px; font-size: 14.800px; letter-spacing: -.35px; display: flex; }
.big { width: 40px; height: 40px; margin-bottom: 4px; }
.cv { width: 8px; height: 6px; margin: 9px 0 0 3px; color: #ccc; }
.cv.solo { margin-left: 0; margin-top: 9px; }
.off b { color: #5f5f5f; }
.off .cv { color: #777; }
.b66 { width: 66px; } .b70 { width: 70px; } .b50 { width: 50px; } .b90 { width: 90px; }
.b28 { width: 28px; } .b52 { width: 52px; } .b86 { width: 86px; } .b34 { width: 34px; }
.b65 { width: 65px; padding-left: 3px; } .b62 { width: 62px; } .b108 { width: 108px; } .b44 { width: 44px; }
.b78 { width: 78px; } .b72 { width: 72px; } .b38 { width: 38px; }
.minis { width: 14px; display: flex; flex-direction: column; align-items: center; gap: 11px; padding-top: 4px; }
.minis svg { width: 20px; height: 21px; }
.gallery { width: 316px; height: 77px; margin-top: 8px; border: 1px solid #6a6a6a; border-radius: 5px; display: flex; flex: none; }
.cells { width: 296px; border-right: 1px solid #6a6a6a; display: grid; grid-template-columns: repeat(9, 32.500px); grid-template-rows: 37px 37px; align-items: center; justify-items: center; padding-left: 1px; flex: none; }
.cells svg { width: 20px; height: 20px; }
.more { flex: 1; display: flex; align-items: center; justify-content: center; }
.more .cv { margin: 8px 0 0; color: #fff; width: 8px; }
.w { fill: none; stroke: #c9c9c9; stroke-width: 1.300; }
.g { fill: #484848; stroke: #909090; stroke-width: 1.100; }
.g2 { fill: none; stroke: #a8a8a8; stroke-width: 1.300; }
.b { fill: #0a66ba; stroke: #62aeee; stroke-width: 1.100; }
.bl { fill: none; stroke: #4aa0e4; stroke-width: 1.300; }
.collapse { margin: 103px 10px 0 auto; }

/* work area */
.work { height: 898px; flex: none; display: flex; margin-top: -1px; border-bottom: 1px solid #666; }
.rail { width: 50px; background: #141414; padding-top: 1px; }
.slot { height: 50px; display: flex; align-items: center; justify-content: center; }
.slot.on { border-left: 3px solid #2aac94; padding-right: 3px; }
.slot svg { margin-top: -2px; }
.slot.dax svg { margin-top: 1px; }
.dax text { font: 700 8.500px "Segoe UI", "Open Sans", sans-serif; fill: #ddd; stroke: #141414; stroke-width: 1.500; paint-order: stroke; }
.stage { width: 1829px; display: grid; grid-template: 854px 43px / 1788px 41px; }
.canvas { background: #3b3b3b; padding: 13px 0 0 190px; overflow: hidden; }
.report { width: 1408px; height: 792px; background: #3a3a3a; box-shadow: 0 0 14px 3px rgba(170, 170, 170, .8); display: grid; grid-template-columns: 720px 688px; grid-template-rows: 90px 353px 349px; }
.head { grid-column: 1 / 3; display: flex; }
.back { width: 78px; height: 78px; margin: 9px 0 0 36px; }
.logo { width: 69px; height: 69px; margin: 6px 0 0 164px; }
.usd { font: 700 14px "Liberation Sans", sans-serif; fill: #0b0b0b; letter-spacing: 0; stroke: #0b0b0b; stroke-width: .6; }
.title { margin-left: 36px; }
.title text { font: 42px Georgia, "Liberation Serif", serif; fill: #fff; stroke: #fff; stroke-width: .3; letter-spacing: 0; }
.chart { letter-spacing: 0; font-family: "Liberation Sans", Arial, sans-serif; }
.c1 { overflow: hidden; }
.c2 { overflow: hidden; }
.ttl { font-size: 20px; fill: #fff; stroke: #fff; stroke-width: .25; }
.leg text { font-size: 15.700px; fill: #c8c6c4; stroke: #c8c6c4; stroke-width: .15; }
.ax text { font-size: 13.300px; fill: #c8c6c4; stroke: #c8c6c4; stroke-width: .35; }
.end text { text-anchor: end; }
.mid text { text-anchor: middle; }
.axt { font-size: 17.300px; fill: #fff; stroke: #fff; stroke-width: .3; }
.grid { stroke: #666; stroke-width: 1; stroke-dasharray: 1.300 4.100; fill: none; }
.th text { font-size: 15.500px; fill: #3c3c3c; }
.ti text { font-size: 13.300px; fill: #3a3a3a; stroke: #3a3a3a; stroke-width: .15; }
.ln { fill: none; stroke-width: 1; }
.bl1 { stroke: #5585aa; }
.bl2 { stroke: #26609a; }
.or { stroke: #b58a22; }
.notes { font-family: Georgia, "Liberation Serif", serif; }
.ins { font-weight: 700; font-size: 32px; fill: #b5411f; }
.k text { font-weight: 700; font-size: 27.200px; fill: #000; }
.v text { font-size: 27.200px; fill: #fff; stroke: #fff; stroke-width: .35; }

/* filter pane */
.filters { background: #3b3b3b; border-left: 1px solid #9a9a9a; display: flex; flex-direction: column; align-items: center; padding-top: 17px; color: #fff; }
.filters .fi { margin: 25px -8px 0 0; }
.filters span { writing-mode: vertical-rl; font-weight: 700; font-size: 17px; margin-top: 12px; letter-spacing: -.05px; line-height: 22px; }

/* page tabs */
.pages { grid-column: 1 / 3; background: #292929; display: flex; height: 44px; }
.ctl { width: 161px; display: flex; border-right: 1px solid #777; padding-left: 14px; }
.desk { width: 30px; height: 39px; border-bottom: 4px solid #2aac94; padding: 8px 0 0 5px; }
.ph { margin: 6px 0 0 33px; }
.pl { margin: 15px 0 0 28px; }
.pr { margin: 15px 0 0 20px; }
.tab { border-right: 1px solid #484848; color: #fff; text-align: center; line-height: 46px; height: 43px; font-size: 14.800px; letter-spacing: -.36px; white-space: nowrap; }
.tab.on { font-weight: 700; border-bottom: 5px solid #2aac94; letter-spacing: -.6px; font-size: 15px; }
.t1 { width: 84px; } .t2 { width: 114px; } .t3 { width: 180px; } .t4 { width: 192px; } .t5 { width: 183px; } .t6 { width: 114px; }
.t5 { letter-spacing: -.2px; }
.add { width: 48px; background: #2aac94; display: flex; justify-content: center; padding-top: 13px; }

/* right pane switcher */
.panes { width: 41px; background: #292929; border-left: 1px solid #666; display: flex; flex-direction: column; justify-content: space-between; }
.top { height: 161px; background: #1f1f1f; padding: 9px 0 0 8px; display: flex; flex-direction: column; gap: 16px; }
.gear { height: 40px; border-top: 1px solid #555; background: #1f1f1f; padding: 7px 0 0 7px; }

/* status bar */
.status { height: 30px; flex: none; background: #141414; border-bottom: 1px solid #555; display: flex; justify-content: space-between; padding: 0 23px 0 5px; line-height: 33px; color: #d0d0d0; box-shadow: inset 0 -2px #000; letter-spacing: -.1px; font-size: 14.600px; }
.zoom { display: flex; }
.zoom svg { margin-top: 7px; }
.zoom span { width: 30px; margin: -1px 23px 0 14px; letter-spacing: -.3px; }
.zoom .fit { margin-top: 9px; }

/* taskbar */
.taskbar { flex: 1; display: flex; background: linear-gradient(90deg, #1b242a 0, #1b232c 26%, #1e1f38 36%, #27194a 43%, #30134e 49%, #37123f 60%, #39133a 70%, #35182f 85%, #201c28 100%); }
.weather { width: 585px; display: flex; padding: 7px 0 0 24px; gap: 4px; }
.weather div { display: flex; flex-direction: column; padding-top: 3px; line-height: 20px; color: #fff; }
.weather .dim { color: #b8bcc0; letter-spacing: -.1px; }
.nine { font: 14px "Open Sans", sans-serif; fill: #111; letter-spacing: -.5px; }
.start { margin-top: 16px; }
.tsearch { width: 275px; height: 40px; margin: 10px 0 0 17px; border-radius: 20px; border: 1px solid rgba(255, 255, 255, .14); background: rgba(255, 255, 255, .15); display: flex; align-items: center; padding-left: 14px; font-size: 17px; color: #d2cfd8; }
.tsearch span { margin-left: 11px; width: 164px; letter-spacing: -.3px; padding-top: 1px; }
.apps { display: flex; margin: 5px 0 0 5px; gap: 5px; }
.app { width: 50px; height: 50px; display: flex; align-items: center; justify-content: center; border-radius: 5px; position: relative; }
.active { background: rgba(255, 255, 255, .09); border: 1px solid rgba(255, 255, 255, .07); }
.dot::after, .active::after { content: ""; position: absolute; bottom: 1px; width: 8px; height: 4px; border-radius: 2px; background: #a08aa6; }
.active::after { width: 20px; background: #dd9be2; bottom: 0; }
.tray { margin-left: auto; display: flex; padding-right: 24px; color: #fff; }
.tray > svg { margin-top: 26px; }
.lang { width: 40px; text-align: center; margin: 11px 0 0 21px; line-height: 20px; }
.tray .wifi { margin: 22px 0 0 17px; }
.tray .spk { margin: 21px 0 0 10px; }
.tray .bat { margin: 23px 0 0 9px; }
.clock { text-align: right; width: 90px; line-height: 20px; padding-top: 10px; }
```
